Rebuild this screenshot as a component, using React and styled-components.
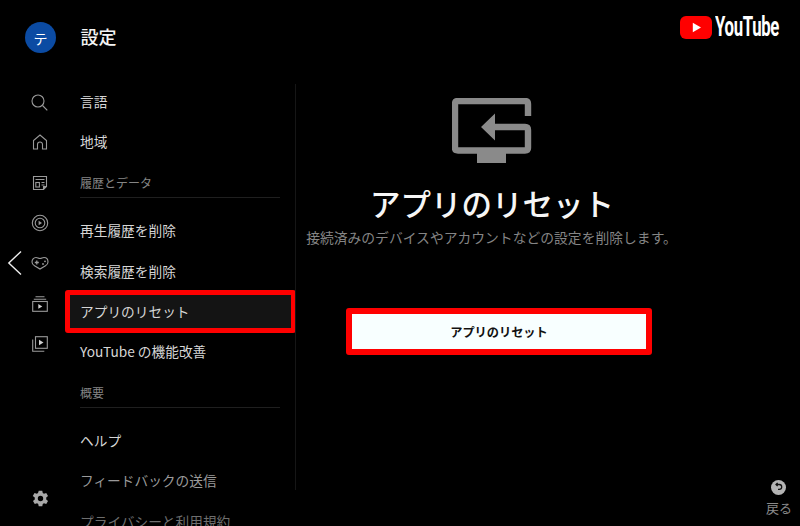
import React from "react";
import styled, { createGlobalStyle } from "styled-components";

const GlobalStyle = createGlobalStyle`
  html, body {
    margin: 0;
    padding: 0;
    background: #000;
  }
`;

const Screen = styled.div`
  position: relative;
  width: 800px;
  height: 526px;
  overflow: hidden;
  background: #000;
  color: #eee;
  display: flex;
  flex-direction: column;
  font-family: "Noto Sans CJK JP", "Noto Sans", sans-serif;
`;

const Header = styled.header`
  height: 82px;
  flex: none;
  display: flex;
  justify-content: space-between;
  align-items: flex-start;
  padding: 22px 20px 0 25px;
  box-sizing: border-box;
`;

const Account = styled.div`
  display: flex;
  align-items: center;
  gap: 24.5px;
`;

const Avatar = styled.div`
  width: 31px;
  height: 31px;
  border-radius: 50%;
  background: #0b4ba3;
  color: #fff;
  font-size: 14px;
  display: flex;
  align-items: center;
  justify-content: center;
`;

const Title = styled.h1`
  margin: 0 0 4px;
  font-size: 18px;
  font-weight: 500;
  color: #f4f4f4;
`;

const Logo = styled.div`
  display: flex;
  align-items: center;
  gap: 3px;
  margin-top: -8px;
`;

const WordMark = styled.span`
  display: block;
  width: 65px;
  font-family: "Roboto", "Liberation Sans", sans-serif;
  font-weight: 700;
  font-size: 27px;
  line-height: 26px;
  letter-spacing: -0.5px;
  color: #fff;
  white-space: nowrap;
  transform: scaleX(0.62);
  transform-origin: left center;
`;

const Body = styled.div`
  flex: 1;
  min-height: 0;
  display: flex;
`;

const Rail = styled.nav`
  width: 80px;
  flex: none;
  display: flex;
  flex-direction: column;
  align-items: center;
  padding-bottom: 19px;
  box-sizing: border-box;
`;

const RailIcon = styled.div`
  height: 40.3px;
  width: 20px;
  flex: none;
  display: flex;
  align-items: center;
  justify-content: center;
`;

const RailSpacer = styled.div`
  flex: 1;
`;

const Chevron = styled.svg`
  position: absolute;
  left: 7px;
  top: 250px;
`;

const List = styled.div`
  width: 216px;
  flex: none;
  padding-right: 16px;
  box-sizing: border-box;
  position: relative;
  &::after {
    content: "";
    position: absolute;
    right: 0;
    top: 2px;
    bottom: 36px;
    width: 1px;
    background: #161616;
  }
`;

const SectionLabel = styled.div`
  height: 36px;
  margin: 0 0 13px;
  padding-top: 11px;
  box-sizing: border-box;
  border-bottom: 1px solid #1f1f1f;
  font-size: 12px;
  line-height: 20px;
  color: #858585;
`;

const Row = styled.div`
  position: relative;
  height: 40.2px;
  display: flex;
  align-items: center;
  padding-bottom: 2px;
  box-sizing: border-box;
  font-size: 13.7px;
  white-space: nowrap;
  color: ${(p) => p.$color || "#d6d6d6"};
  span {
    position: relative;
  }
  ${(p) =>
    p.$selected &&
    `
    &::before {
      content: "";
      position: absolute;
      left: -15px;
      right: -16px;
      top: -1.5px;
      bottom: -1.5px;
      background: #141414;
      border: 5.5px solid #ff0000;
      border-radius: 3px;
      box-sizing: border-box;
    }
  `}
`;

const Main = styled.main`
  flex: 1;
  padding: 16px 112px 0 0;
  display: flex;
  flex-direction: column;
  align-items: center;
`;

const Heading = styled.h2`
  margin: 18px 0 0;
  font-size: 30.5px;
  line-height: 42px;
  font-weight: 500;
  color: #f6f6f6;
  white-space: nowrap;
`;

const Description = styled.p`
  margin: 3px 1px 0 0;
  font-size: 13.8px;
  line-height: 20px;
  color: #858585;
  white-space: nowrap;
`;

const ResetButton = styled.button`
  margin: 61px 0 0 14px;
  width: 306px;
  height: 47px;
  flex: none;
  background: #f8ffff;
  border: 6px solid #ff0000;
  border-radius: 3px;
  color: #111;
  font-family: inherit;
  font-size: 12.2px;
  font-weight: 700;
`;

const BackHint = styled.div`
  position: absolute;
  right: 8px;
  bottom: 10px;
  display: flex;
  flex-direction: column;
  align-items: center;
  gap: 5px;
  font-size: 13px;
  line-height: 16px;
  color: #8a8a8a;
`;

const ICON = { fill: "none", stroke: "#9a9a9a", strokeWidth: 1.1 };

const SearchIcon = () => (
  <svg width="18" height="18" viewBox="0 0 18 18" {...ICON}>
    <circle cx="7" cy="8" r="6" />
    <path d="M11.500 12.500l4.800 4.800" />
  </svg>
);

const HomeIcon = () => (
  <svg width="16" height="16" viewBox="0 0 16 16" {...ICON}>
    <path d="M1.500 15V6.500L8 1l6.500 5.500V15h-4V10.500a2.500 2.500 0 0 0-5 0V15z" />
  </svg>
);

const NewsIcon = () => (
  <svg width="16" height="16" viewBox="0 0 16 16" {...ICON}>
    <path d="M1.500 1.500h13v10l-3 3h-10z" />
    <path d="M3.500 4.500h9M9.500 7.500h3M9.500 10h3" />
    <rect x="3.800" y="7.500" width="3.600" height="4.500" />
    <path d="M11.500 14.500v-3h3" fill="#9a9a9a" />
  </svg>
);

const PlayCircleIcon = () => (
  <svg width="18" height="18" viewBox="0 0 18 18" {...ICON}>
    <circle cx="9" cy="9" r="7.700" />
    <circle cx="9" cy="9" r="4.800" />
    <path d="M7.600 6.800l3.400 2.200-3.400 2.200z" fill="#9a9a9a" stroke="none" />
  </svg>
);

const GameIcon = () => (
  <svg width="18" height="16" viewBox="0 0 18 16" {...ICON}>
    <path d="M5 2.500c1.600 0 2.400 1 4 1s2.400-1 4-1c2.400 0 4 2 4 4.500 0 1.800-1 3-2.500 3.800L9 14 3.500 10.800C2 10 1 8.800 1 7c0-2.500 1.600-4.500 4-4.500z" />
    <path d="M5.800 5.500v4M3.800 7.500h4" strokeWidth="1.300" />
    <circle cx="12" cy="9" r="0.900" fill="#9a9a9a" stroke="none" />
    <circle cx="14" cy="6.300" r="0.900" fill="#9a9a9a" stroke="none" />
  </svg>
);

const QueueIcon = () => (
  <svg width="16" height="16" viewBox="0 0 16 16" {...ICON}>
    <path d="M3.500 0.800h9M1.800 3.300h12.400" />
    <rect x="0.700" y="5.500" width="14.600" height="9.800" />
    <path d="M6.300 8l4 2.400-4 2.400z" fill="#d0d0d0" stroke="none" />
  </svg>
);

const LibraryIcon = () => (
  <svg width="16" height="16" viewBox="0 0 16 16" {...ICON}>
    <rect x="3.500" y="0.700" width="11.800" height="11.600" />
    <path d="M0.700 3.500v11.800h11.600" />
    <path d="M7 3.800l4.500 2.700L7 9.200z" fill="#d0d0d0" stroke="none" />
  </svg>
);

const GearIcon = () => (
  <svg width="17" height="17" viewBox="0 0 24 24">
    <path
      fill="#a8a8a8"
      fillRule="evenodd"
      d="M9.500 1h5l.7 3.300 1.700 1 3.200-1.100 2.500 4.300-2.500 2.200v2.600l2.500 2.200-2.500 4.300-3.200-1.100-1.700 1-.7 3.300h-5l-.7-3.300-1.700-1-3.200 1.100-2.500-4.300 2.500-2.200v-2.600L1.100 8.500l2.500-4.300 3.200 1.100 1.700-1zM12 8.200a3.800 3.800 0 1 0 0 7.600 3.800 3.800 0 0 0 0-7.600z"
    />
  </svg>
);

const MonitorIcon = () => (
  <svg width="80" height="66" viewBox="0 0 80 66" fill="none">
    <path
      d="M76 18V6q0-3-3-3H6Q3 3 3 6v44q0 2.500 3 2.500h67q3 0 3-2.500V32q0-3-3-3H40"
      stroke="#8a8a8a"
      strokeWidth="6.400"
    />
    <path d="M29 29l14-13.500v27zM25 55h29v10H25z" fill="#8a8a8a" />
  </svg>
);

const YouTubeMark = () => (
  <svg width="32" height="23" viewBox="0 0 32 23">
    <rect width="32" height="23" rx="6" fill="#f00" />
    <path d="M12.800 6.800l8.200 4.700-8.200 4.700z" fill="#fff" />
  </svg>
);

const BackIcon = () => (
  <svg width="15" height="15" viewBox="0 0 15 15">
    <circle cx="7.500" cy="7.500" r="7.500" fill="#b4b4b4" />
    <path
      d="M5.300 4.500h3a2.300 2.300 0 0 1 0 4.800H7M6.600 2.900L5 4.500l1.600 1.600"
      fill="none"
      stroke="#111"
      strokeWidth="1.300"
    />
  </svg>
);

const railIcons = [
  SearchIcon,
  HomeIcon,
  NewsIcon,
  PlayCircleIcon,
  GameIcon,
  QueueIcon,
  LibraryIcon,
];

const App = () => {
  return (
    <Screen>
      <GlobalStyle />
      <Header>
        <Account>
          <Avatar>テ</Avatar>
          <Title>設定</Title>
        </Account>
        <Logo>
          <YouTubeMark />
          <WordMark>YouTube</WordMark>
        </Logo>
      </Header>
      <Body>
        <Rail>
          {railIcons.map((Icon, i) => (
            <RailIcon key={i}>
              <Icon />
            </RailIcon>
          ))}
          <RailSpacer />
          <GearIcon />
        </Rail>
        <List>
          <Row>
            <span>言語</span>
          </Row>
          <Row>
            <span>地域</span>
          </Row>
          <SectionLabel>履歴とデータ</SectionLabel>
          <Row>
            <span>再生履歴を削除</span>
          </Row>
          <Row>
            <span>検索履歴を削除</span>
          </Row>
          <Row $selected>
            <span>アプリのリセット</span>
          </Row>
          <Row>
            <span>YouTube の機能改善</span>
          </Row>
          <SectionLabel>概要</SectionLabel>
          <Row>
            <span>ヘルプ</span>
          </Row>
          <Row $color="#9a9a9a">
            <span>フィードバックの送信</span>
          </Row>
          <Row $color="#6e6e6e">
            <span>プライバシーと利用規約</span>
          </Row>
        </List>
        <Main>
          <MonitorIcon />
          <Heading>アプリのリセット</Heading>
          <Description>接続済みのデバイスやアカウントなどの設定を削除します。</Description>
          <ResetButton>アプリのリセット</ResetButton>
        </Main>
      </Body>
      <Chevron width="16" height="26" viewBox="0 0 16 26" fill="none">
        <path d="M14 1.500L1.800 13 14 24.500" stroke="#eee" strokeWidth="1.400" />
      </Chevron>
      <BackHint>
        <BackIcon />
        戻る
      </BackHint>
    </Screen>
  );
};

export default App;
